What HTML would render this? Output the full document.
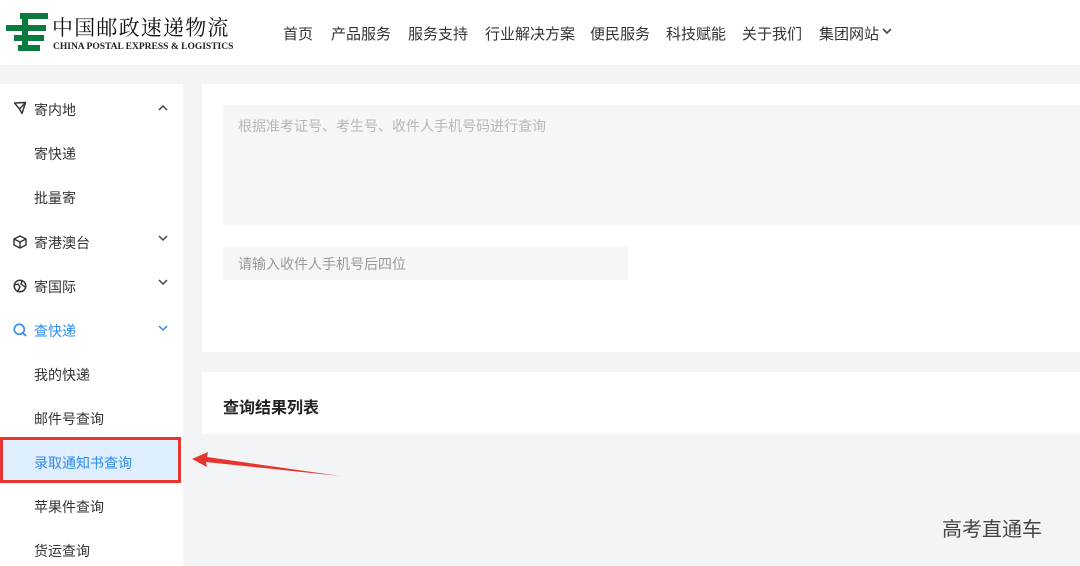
<!DOCTYPE html>
<html><head><meta charset="utf-8"><style>
*{margin:0;padding:0;box-sizing:border-box}
body{width:1080px;height:566px;overflow:hidden;background:#f3f4f6;font-family:"Liberation Sans","Noto Sans CJK SC",sans-serif;position:relative}
.hdr{position:absolute;left:0;top:0;width:1080px;height:65px;background:#fff}
.nav{position:absolute;top:22px;font-size:15px;color:#333}
.side{position:absolute;left:0;top:84px;width:183px;height:482px;background:#fff}
.it{position:absolute;font-size:14px;color:#333}
.ic{position:absolute;left:13px}
.chev{position:absolute;left:158px}
.p1{position:absolute;left:202px;top:84px;width:878px;height:268px;background:#fff}
.p2{position:absolute;left:202px;top:372px;width:878px;height:62px;background:#fff}
</style></head><body>
<div class="hdr">
<svg style="position:absolute;left:6px;top:13px" width="42" height="40" viewBox="0 0 42 40"><g fill="#0a7a3e"><rect x="14" y="0" width="28" height="6"/><rect x="0" y="12" width="40" height="6"/><rect x="8" y="22" width="30" height="6"/><rect x="12" y="32" width="22" height="6"/><rect x="16" y="0" width="6" height="38"/></g></svg>
<div style="position:absolute;left:52px;top:14px;font-family:'Noto Serif CJK SC',serif;font-size:21px;letter-spacing:1.2px;color:#111;line-height:26px">中国邮政速递物流</div>
<div style="position:absolute;left:53px;top:42px;font-family:'Liberation Serif',serif;font-size:9.5px;font-weight:bold;color:#222">CHINA POSTAL EXPRESS &amp; LOGISTICS</div>
<div class="nav" style="left:283px;top:23px">首页</div>
<div class="nav" style="left:331px;top:23px">产品服务</div>
<div class="nav" style="left:408px;top:23px">服务支持</div>
<div class="nav" style="left:485px;top:23px">行业解决方案</div>
<div class="nav" style="left:590px;top:23px">便民服务</div>
<div class="nav" style="left:666px;top:23px">科技赋能</div>
<div class="nav" style="left:742px;top:23px">关于我们</div>
<div class="nav" style="left:819px;top:23px">集团网站</div>
<svg style="position:absolute;left:882px;top:27px" width="10" height="8"><path d="M1,2 L5,6 L9,2" stroke="#444" stroke-width="1.6" fill="none"/></svg>
</div>
<div class="side">
<svg class="ic" style="top:17px" width="14" height="14" viewBox="0 0 14 14"><path d="M1.5,2 L12.5,1.5 L9,12.5 L6.5,8 Z M6.5,8 L12.5,1.5" stroke="#333" stroke-width="1.4" fill="none" stroke-linejoin="round"/></svg>
<div class="it" style="left:34px;top:16px">寄内地</div>
<svg class="chev" style="top:20px" width="10" height="7"><path d="M1,6 L5,2 L9,6" stroke="#444" stroke-width="1.5" fill="none"/></svg>
<div class="it" style="left:34px;top:60px">寄快递</div>
<div class="it" style="left:34px;top:104px">批量寄</div>
<svg class="ic" style="top:151px" width="14" height="14" viewBox="0 0 14 14"><path d="M7,1 L13,4 L13,10 L7,13 L1,10 L1,4 Z M1,4 L7,7 L13,4 M7,7 L7,13" stroke="#333" stroke-width="1.4" fill="none" stroke-linejoin="round"/></svg>
<div class="it" style="left:34px;top:149px">寄港澳台</div>
<svg class="chev" style="top:151px" width="10" height="7"><path d="M1,1 L5,5 L9,1" stroke="#444" stroke-width="1.5" fill="none"/></svg>
<svg class="ic" style="top:195px" width="14" height="14" viewBox="0 0 14 14"><circle cx="7" cy="7" r="5.8" stroke="#333" stroke-width="1.5" fill="none"/><path d="M2,6 L5,5 L7,8 L5,12 M9,2 L8,5 L12,8" stroke="#333" stroke-width="1.4" fill="none"/></svg>
<div class="it" style="left:34px;top:193px">寄国际</div>
<svg class="chev" style="top:195px" width="10" height="7"><path d="M1,1 L5,5 L9,1" stroke="#444" stroke-width="1.5" fill="none"/></svg>
<svg class="ic" style="top:239px" width="14" height="14" viewBox="0 0 14 14"><circle cx="6.3" cy="6.3" r="5" stroke="#2d8cf0" stroke-width="1.6" fill="none"/><path d="M9.8,9.8 L13,13" stroke="#2d8cf0" stroke-width="1.8"/></svg>
<div class="it" style="left:34px;top:237px;color:#2d8cf0">查快递</div>
<svg class="chev" style="top:241px" width="10" height="7"><path d="M1,1 L5,5 L9,1" stroke="#2d8cf0" stroke-width="1.5" fill="none"/></svg>
<div class="it" style="left:34px;top:281px">我的快递</div>
<div class="it" style="left:34px;top:325px">邮件号查询</div>
<div style="position:absolute;left:0;top:353px;width:181px;height:46px;background:#deeefe;border:3px solid #e8332f"></div>
<div class="it" style="left:34px;top:369px;color:#2d8cf0">录取通知书查询</div>
<div class="it" style="left:34px;top:413px">苹果件查询</div>
<div class="it" style="left:34px;top:457px">货运查询</div>
</div>
<div class="p1">
<div style="position:absolute;left:21px;top:21px;width:860px;height:120px;background:#f5f6f7;border-radius:3px"></div>
<div style="position:absolute;left:36px;top:32px;font-size:14px;color:#b4b8bd">根据准考证号、考生号、收件人手机号码进行查询</div>
<div style="position:absolute;left:21px;top:163px;width:405px;height:33px;background:#f5f6f7"></div>
<div style="position:absolute;left:36px;top:170px;font-size:14px;color:#999">请输入收件人手机号后四位</div>
</div>
<div class="p2"><div style="position:absolute;left:21px;top:22px;font-size:16px;font-weight:bold;color:#222">查询结果列表</div></div>
<svg style="position:absolute;left:190px;top:448px" width="160" height="32"><polygon points="2,11 18,4 17,9 150,28 16,14 17,19" fill="#e8332f"/></svg>
<div style="position:absolute;left:942px;top:513px;font-size:20px;color:#444">高考直通车</div>
</body></html>
